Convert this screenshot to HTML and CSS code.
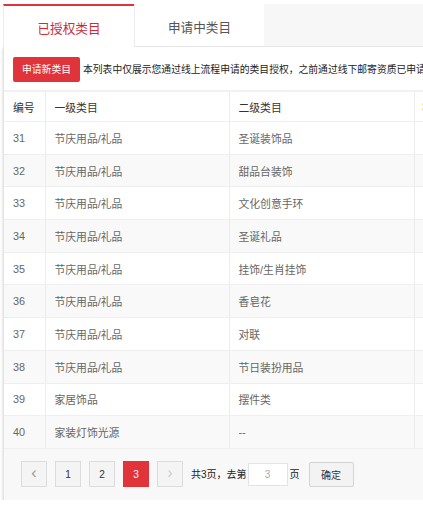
FILE: index.html
```html
<!DOCTYPE html>
<html lang="zh">
<head>
<meta charset="utf-8">
<link rel="stylesheet" href="styles.css">
</head>
<body>
<div class="page">
  <div class="tabs">
    <div class="tab tab-active">已授权类目</div>
    <div class="tab">申请中类目</div>
    <div class="tab-rest"></div>
  </div>
  <div class="card">
    <div class="toolbar">
      <button class="btn-apply">申请新类目</button>
      <span class="notice">本列表中仅展示您通过线上流程申请的类目授权，之前通过线下邮寄资质已申请的类目请联系客服查询</span>
    </div>
    <table class="grid">
      <colgroup>
        <col class="c-num"><col class="c-l1"><col class="c-l2"><col class="c-more">
      </colgroup>
      <thead>
        <tr><th>编号</th><th>一级类目</th><th>二级类目</th><th class="th-more">状态</th></tr>
      </thead>
      <tbody>
        <tr><td>31</td><td>节庆用品/礼品</td><td>圣诞装饰品</td><td></td></tr>
        <tr><td>32</td><td>节庆用品/礼品</td><td>甜品台装饰</td><td></td></tr>
        <tr><td>33</td><td>节庆用品/礼品</td><td>文化创意手环</td><td></td></tr>
        <tr><td>34</td><td>节庆用品/礼品</td><td>圣诞礼品</td><td></td></tr>
        <tr><td>35</td><td>节庆用品/礼品</td><td>挂饰/生肖挂饰</td><td></td></tr>
        <tr><td>36</td><td>节庆用品/礼品</td><td>香皂花</td><td></td></tr>
        <tr><td>37</td><td>节庆用品/礼品</td><td>对联</td><td></td></tr>
        <tr><td>38</td><td>节庆用品/礼品</td><td>节日装扮用品</td><td></td></tr>
        <tr><td>39</td><td>家居饰品</td><td>摆件类</td><td></td></tr>
        <tr><td>40</td><td>家装灯饰光源</td><td>--</td><td></td></tr>
      </tbody>
    </table>
    <div class="pager">
      <span class="pg pg-arrow">&lsaquo;</span>
      <span class="pg">1</span>
      <span class="pg">2</span>
      <span class="pg pg-active">3</span>
      <span class="pg pg-arrow pg-disabled">&rsaquo;</span>
      <span class="pg-text">共3页，去第</span>
      <input class="pg-input" type="text" placeholder="3">
      <span class="pg-text">页</span>
      <button class="pg-ok">确定</button>
    </div>
  </div>
</div>
</body>
</html>
```
FILE: styles.css
```css
html, body {
  margin: 0;
  padding: 0;
  background: #fff;
  overflow: hidden;
}
body {
  font-family: "Liberation Sans", "Noto Sans CJK SC", sans-serif;
  color: #333;
}
.page {
  padding: 4px 0 0 3px;
  width: 700px;
}
.tabs {
  display: flex;
  height: 43px;
  background: #f7f7f7;
}
.tab {
  width: 130px;
  box-sizing: border-box;
  background: #fff;
  border-left: 1px solid #ececec;
  border-bottom: 1px solid #e6e6e6;
  display: flex;
  align-items: center;
  justify-content: center;
  font-size: 12.6px;
  color: #555;
  padding-top: 3px;
}
.tab-active {
  width: 131px;
  border-top: 2px solid #e0343a;
  border-bottom: none;
  color: #cf2b35;
  padding-top: 1px;
}
.tab-rest {
  flex: 1;
  border-bottom: 1px solid #e6e6e6;
}
.card {
  background: #fff;
  border-left: 1px solid #e4e4e4;
  box-shadow: 0 2px 3px rgba(0,0,0,0.18);
  width: 640px;
}
.toolbar {
  height: 43px;
  display: flex;
  align-items: center;
  padding-left: 9px;
  border-bottom: 2px solid #f1f1f1;
  white-space: nowrap;
  overflow: hidden;
}
.btn-apply {
  height: 25px;
  width: 67px;
  border: none;
  border-radius: 2px;
  background: #e0343a;
  color: #fff;
  font-family: inherit;
  font-size: 9.8px;
  padding: 0;
  margin-top: 1px;
}
.notice {
  margin-left: 3px;
  font-size: 9.8px;
  color: #222;
}
.grid {
  border-collapse: collapse;
  table-layout: fixed;
  width: 100%;
  font-size: 10.8px;
}
.c-num { width: 41px; }
.c-l1 { width: 184px; }
.c-l2 { width: 185px; }
.grid th {
  height: 29px;
  text-align: left;
  font-weight: normal;
  color: #333;
  padding: 0 0 0 9px;
  border-right: 1px solid #ececec;
  border-bottom: 1px solid #efefef;
}
.grid th.th-more {
  color: #f0c060;
  padding-left: 7px;
}
.grid td {
  height: 31.7px;
  padding: 0 0 0 9px;
  color: #666;
  border-right: 1px solid #ececec;
  border-bottom: 1px solid #efefef;
  white-space: nowrap;
}
.grid tbody tr:nth-child(even) td {
  background: #f9f9f9;
}
.pager {
  height: 51px;
  background: #f8f8f8;
  display: flex;
  align-items: center;
  padding-left: 17px;
  font-size: 10px;
}
.pg {
  width: 26px;
  height: 26px;
  box-sizing: border-box;
  border: 1px solid #dcdcdc;
  background: #f4f4f4;
  display: flex;
  align-items: center;
  justify-content: center;
  color: #333;
  font-size: 10px;
  margin-right: 8px;
}
.pg-arrow {
  font-size: 16px;
  color: #999;
  padding-bottom: 2px;
}
.pg-disabled {
  color: #ccc;
}
.pg-active {
  background: #e0343a;
  border-color: #e0343a;
  color: #fff;
}
.pg-text {
  color: #222;
  margin-top: -2px;
}
.pg-text:first-of-type {
  margin-left: -1px;
}
.pg-input {
  width: 40px;
  height: 23px;
  box-sizing: border-box;
  border: 1px solid #e3e3e3;
  background: #fff;
  margin: 0 2px 0 1px;
  text-align: center;
  font-family: inherit;
  font-size: 10px;
  padding: 0;
}
.pg-input::placeholder {
  color: #aaa;
}
.pg-ok {
  margin-left: 9px;
  width: 45px;
  height: 25px;
  box-sizing: border-box;
  border: 1px solid #d4d4d4;
  border-radius: 2px;
  background: #f3f3f3;
  font-family: inherit;
  font-size: 10px;
  color: #333;
  padding: 0;
  margin-top: 1px;
}
```
